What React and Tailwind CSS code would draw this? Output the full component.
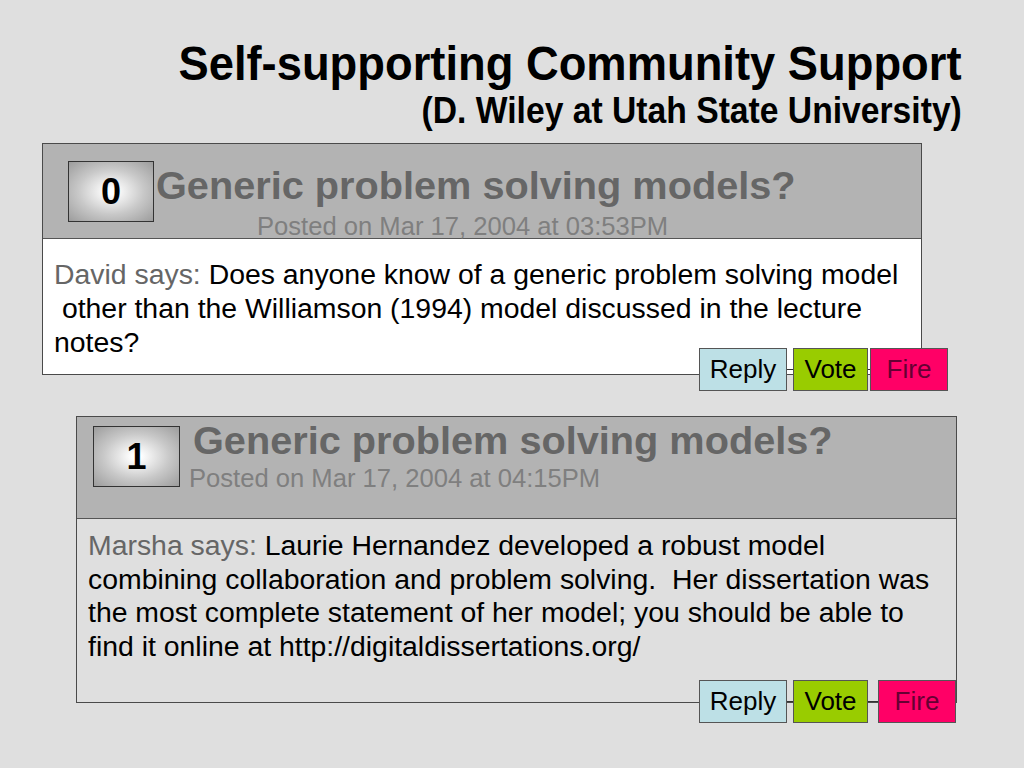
const posts = [
  {
    id: 0,
    wrap: "ml-[42px] mt-[13px] w-[880px] h-[232px]",
    head: "h-[95px]",
    body: "bg-white pt-[18px] leading-[34px]",
    box: "ml-[25px] mt-[17px] w-[86px] h-[61px]",
    titleCls: "ml-[2px] mt-[21px]",
    postedCls: "ml-[103px] mt-[8px]",
    posted: "Posted on Mar 17, 2004 at 03:53PM",
    author: "David",
    lines: [
      "Does anyone know of a generic problem solving model",
      "\u00a0other than the Williamson (1994) model discussed in the lecture",
      "notes?",
    ],
    buttons: "left-[656px] -bottom-[17px]",
    gaps: ["w-[6px]", "w-[2px]"],
  },
  {
    id: 1,
    wrap: "ml-[76px] mt-[41px] w-[881px] h-[287px]",
    head: "h-[102px]",
    body: "bg-transparent pt-[10px] leading-[33.7px]",
    box: "ml-[16px] mt-[9px] w-[87px] h-[61px]",
    titleCls: "ml-[13px] mt-[3px]",
    postedCls: "ml-[9px] mt-[5px]",
    posted: "Posted on Mar 17, 2004 at 04:15PM",
    author: "Marsha",
    lines: [
      "Laurie Hernandez developed a robust model",
      "combining collaboration and problem solving.  Her dissertation was",
      "the most complete statement of her model; you should be able to",
      "find it online at http://digitaldissertations.org/",
    ],
    buttons: "left-[622px] -bottom-[21px]",
    gaps: ["w-[6px]", "w-[10px]"],
  },
];

export default function App() {
  return (
    <div className="w-[1024px] h-[768px] bg-[#dfdfdf] overflow-hidden font-['Liberation_Sans',Arial,sans-serif]">
      {/* TITLE */}
      <div className="pt-[37px] pr-[62px] flex flex-col items-end text-black font-bold">
        <div className="text-[49px] leading-[52px] whitespace-nowrap scale-x-[0.925] origin-right">
          Self-supporting Community Support
        </div>
        <div className="mt-[3px] text-[36px] leading-[38px] whitespace-nowrap scale-x-[0.935] origin-right">
          (D. Wiley at Utah State University)
        </div>
      </div>

      {posts.map(p => (
        <PostCard key={p.id} p={p} />
      ))}
    </div>
  );
}

/* ======================================================
   POST CARD
   ====================================================== */
function PostCard({ p }) {
  return (
    <div className={`relative flex flex-col border border-[#4a4a4a] ${p.wrap}`}>
      {/* HEADER */}
      <div className={`shrink-0 flex items-start bg-[#b3b3b3] border-b border-[#555] ${p.head}`}>
        <div
          className={`shrink-0 flex items-center justify-center border border-[#333] bg-[radial-gradient(ellipse_at_center,#ffffff_8%,#c8c8c8_55%,#9c9c9c_100%)] text-[36px] font-bold text-black ${p.box}`}
        >
          {p.id}
        </div>
        <div className="flex flex-col">
          <div className={`text-[39.7px] leading-[40px] font-bold text-[#666] whitespace-nowrap ${p.titleCls}`}>
            Generic problem solving models?
          </div>
          <div className={`text-[25.6px] leading-[26px] text-[#7f7f7f] whitespace-nowrap ${p.postedCls}`}>
            {p.posted}
          </div>
        </div>
      </div>

      {/* BODY */}
      <div className={`flex-1 pl-[11px] text-[28.4px] text-black ${p.body}`}>
        {p.lines.map((line, i) => (
          <div key={i} className="whitespace-pre">
            {i === 0 && <span className="text-[#666]">{p.author} says: </span>}
            {line}
          </div>
        ))}
      </div>

      {/* ACTIONS */}
      <div className={`absolute flex items-center ${p.buttons}`}>
        <button className="w-[88px] h-[43px] bg-[#bde0e6] border border-[#555] text-[26px] text-black">
          Reply
        </button>
        <div className={`h-px bg-[#333] ${p.gaps[0]}`} />
        <button className="w-[75px] h-[43px] bg-[#99cc00] border border-[#555] text-[26px] text-black">
          Vote
        </button>
        <div className={`h-px bg-[#333] ${p.gaps[1]}`} />
        <button className="w-[78px] h-[43px] bg-[#ff0066] border border-[#555] text-[26px] text-[#660033]">
          Fire
        </button>
      </div>
    </div>
  );
}
